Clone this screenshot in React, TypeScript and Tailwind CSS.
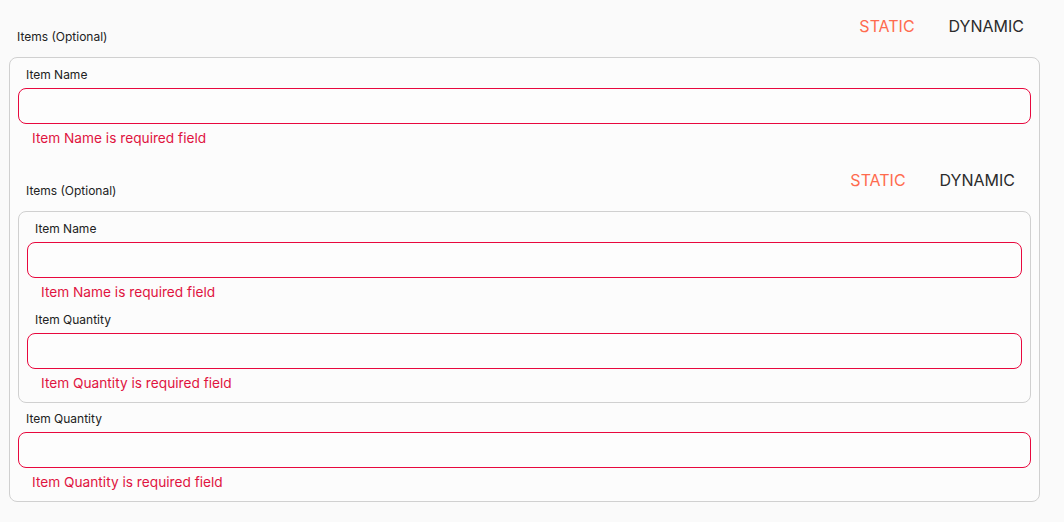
import React from 'react';

const font = { fontFamily: 'Inter, "Noto Sans", sans-serif' };

const Field = ({ label }: { label: string }) => (
    <div className="pb-[9px]">
        <div className="pl-2 pt-px text-xs leading-4 text-[#222]">{label}</div>
        <div className="mt-[5px] h-9 rounded-lg border border-[#e8083e] bg-[#fdfdfd]" />
        <div className="mt-1 pl-3.5 text-[13.7px] leading-5 text-[#e0143f]">{label} is required field</div>
    </div>
);

const Header = () => (
    <div className="mb-[13px] flex h-[41px] items-end justify-between">
        <div className="-mb-px pl-2 text-xs leading-4 text-[#222]">Items (Optional)</div>
        <div className="flex gap-0.5">
            <button className="h-9 px-4 text-base text-[#ff6b4e]">STATIC</button>
            <button className="h-9 px-4 text-base text-[#2b2b2b]">DYNAMIC</button>
        </div>
    </div>
);

const App = () => {
    return (
        <div className="min-h-[522px] bg-[#fafafa] pl-[9px] pt-[3px]" style={font}>
            <div className="w-[1031px]">
                <Header />
                <div className="rounded-lg border border-[#d0d0d0] bg-[#fcfcfc] px-2 pt-2">
                    <Field label="Item Name" />
                    {/* nested items block */}
                    <div className="mb-[7px]">
                        <Header />
                        <div className="rounded-lg border border-[#d0d0d0] px-2 pt-2">
                            <Field label="Item Name" />
                            <Field label="Item Quantity" />
                        </div>
                    </div>
                    <Field label="Item Quantity" />
                </div>
            </div>
        </div>
    );
};

export default App;
